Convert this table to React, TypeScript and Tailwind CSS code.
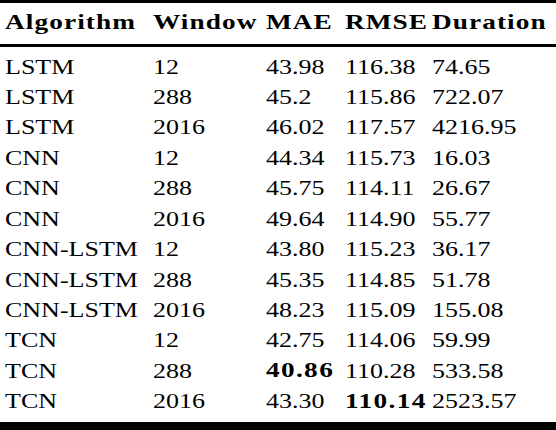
const header = ["Algorithm", "Window", "MAE", "RMSE", "Duration"];

type Row = {
  algorithm: string;
  window: string;
  mae: string;
  rmse: string;
  duration: string;
  bestMae?: boolean;
  bestRmse?: boolean;
};

const rows: Row[] = [
  { algorithm: "LSTM", window: "12", mae: "43.98", rmse: "116.38", duration: "74.65" },
  { algorithm: "LSTM", window: "288", mae: "45.2", rmse: "115.86", duration: "722.07" },
  { algorithm: "LSTM", window: "2016", mae: "46.02", rmse: "117.57", duration: "4216.95" },
  { algorithm: "CNN", window: "12", mae: "44.34", rmse: "115.73", duration: "16.03" },
  { algorithm: "CNN", window: "288", mae: "45.75", rmse: "114.11", duration: "26.67" },
  { algorithm: "CNN", window: "2016", mae: "49.64", rmse: "114.90", duration: "55.77" },
  { algorithm: "CNN-LSTM", window: "12", mae: "43.80", rmse: "115.23", duration: "36.17" },
  { algorithm: "CNN-LSTM", window: "288", mae: "45.35", rmse: "114.85", duration: "51.78" },
  { algorithm: "CNN-LSTM", window: "2016", mae: "48.23", rmse: "115.09", duration: "155.08" },
  { algorithm: "TCN", window: "12", mae: "42.75", rmse: "114.06", duration: "59.99" },
  { algorithm: "TCN", window: "288", mae: "40.86", rmse: "110.28", duration: "533.58", bestMae: true },
  { algorithm: "TCN", window: "2016", mae: "43.30", rmse: "110.14", duration: "2523.57", bestRmse: true },
];

// column widths are unscaled px, the table gets stretched by scale-x like the latex render
const cols = "grid grid-cols-[113.8px_86.9px_60.8px_66.9px_1fr]";
const best = "font-bold text-[21px] tracking-[0.05em]";

export default function App() {
  return (
    <div className="w-[556px] h-[430px] bg-white overflow-hidden text-black">
      <div
        className="w-[427.7px] origin-left scale-x-[1.3] text-[20px] leading-none"
        style={{ fontFamily: '"Liberation Serif", "Times New Roman", serif' }}
      >
        <div className="h-[3px] bg-black" />
        <div className={`${cols} pl-[3.85px] pb-[2px] h-[41px] items-center font-bold text-[21px] tracking-[0.04em]`}>
          {header.map((h) => (
            <div key={h} className="whitespace-nowrap">{h}</div>
          ))}
        </div>
        <div className="h-[3px] bg-black" />
        <div className="pt-[4.3px]">
          {rows.map((r, i) => (
            <div key={i} className={`${cols} pl-[3.85px] h-[30.45px] items-center whitespace-nowrap`}>
              <div>{r.algorithm}</div>
              <div>{r.window}</div>
              <div className={r.bestMae ? best : ""}>{r.mae}</div>
              <div className={r.bestRmse ? best : ""}>{r.rmse}</div>
              <div>{r.duration}</div>
            </div>
          ))}
        </div>
        <div className="mt-[5.3px] h-[8px] bg-black" />
      </div>
    </div>
  );
}
